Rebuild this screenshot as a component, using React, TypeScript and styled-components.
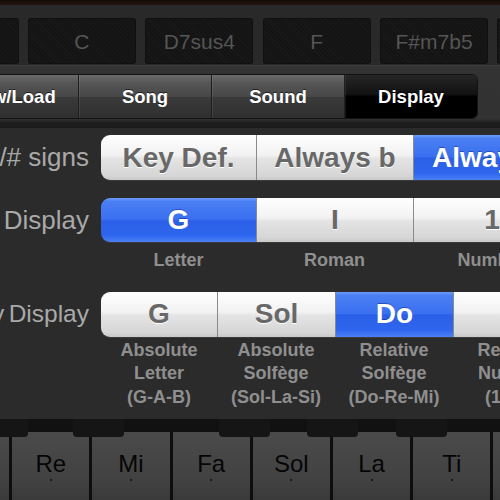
import React from "react"
import styled, { createGlobalStyle } from "styled-components"

const GlobalStyle = createGlobalStyle`
  html, body {
    margin: 0;
    padding: 0;
    background: #2a2a2a;
  }
  body {
    font-family: "Liberation Sans", Arial, sans-serif;
  }
`

const Screen = styled.div`
  width: 500px;
  height: 500px;
  overflow: hidden;
  background: #2a2a2a;
  display: flex;
  flex-direction: column;
`

// chord strip on top
const TopEdge = styled.div`
  height: 5px;
  background: linear-gradient(#140c08, #21150f);
  flex: none;
`

const ChordStrip = styled.div`
  height: 60px;
  flex: none;
  display: flex;
  gap: 9.4px;
  padding-top: 13px;
  box-sizing: border-box;
  margin-left: -89.5px;
  background: #292929;
`

const ChordBox = styled.div`
  width: 108px;
  height: 46px;
  flex: none;
  border-radius: 3px;
  background:
    repeating-linear-gradient(45deg, rgba(255, 255, 255, 0.02) 0 1px, transparent 1px 3px),
    #141414;
  box-shadow: inset 0 0 0 1px #101010;
  display: flex;
  align-items: center;
  justify-content: center;
  padding-top: 2px;
  box-sizing: border-box;
  color: #555;
  font-size: 21px;
`

// tab band
const TabBand = styled.div`
  height: 63px;
  flex: none;
  box-sizing: border-box;
  padding-top: 9px;
  background: linear-gradient(#3c3c3c 0, #333 2px, #323232 54px, #1c1c1c 58px, #1c1c1c 63px);
`

const TabBar = styled.div`
  display: flex;
  width: 533px;
  height: 45px;
  margin-left: -55px;
  border: 1px solid #121212;
  border-radius: 6px;
  overflow: hidden;
  box-sizing: border-box;
`

const Tab = styled.div<{ $on?: boolean }>`
  flex: 1;
  display: flex;
  align-items: center;
  justify-content: center;
  color: #fff;
  font-weight: bold;
  font-size: 18.5px;
  text-shadow: 0 -1px 0 rgba(0, 0, 0, 0.6);
  border-left: 1px solid #1e1e1e;
  box-shadow: inset 1px 0 0 rgba(255, 255, 255, 0.08);
  background: ${(p) =>
    p.$on
      ? "linear-gradient(#262626 0, #111 45%, #000 50%, #000 100%)"
      : "linear-gradient(#6a6a6a 0, #555 20%, #474747 50%, #3a3a3a 52%, #2f2f2f 100%)"};
  &:first-child {
    border-left: none;
  }
`

// settings panel
const Panel = styled.div`
  flex: none;
  height: 291px;
  box-sizing: border-box;
  padding-top: 7px;
  background: #2b2b2b;
  display: flex;
  flex-direction: column;
`

const Row = styled.div<{ $gap: number }>`
  display: flex;
  align-items: flex-start;
  gap: 12px;
  margin-top: ${(p) => p.$gap}px;
  margin-left: -111px;
`

const Label = styled.div<{ $h: number; $size?: number; $spacing?: number }>`
  width: 200px;
  height: ${(p) => p.$h}px;
  flex: none;
  display: flex;
  align-items: center;
  justify-content: flex-end;
  color: #a9a9a9;
  font-size: ${(p) => p.$size ?? 26}px;
  word-spacing: ${(p) => p.$spacing ?? 0}px;
  white-space: nowrap;
`

const Options = styled.div`
  display: flex;
  flex-direction: column;
`

const Segmented = styled.div<{ $h: number }>`
  display: flex;
  height: ${(p) => p.$h}px;
  border-radius: 9px 0 0 9px;
  overflow: hidden;
  box-shadow: 0 1px 0 rgba(255, 255, 255, 0.08);
`

const Segment = styled.div<{ $w: number; $on?: boolean }>`
  width: ${(p) => p.$w}px;
  flex: none;
  display: flex;
  align-items: center;
  justify-content: center;
  font-weight: bold;
  font-size: 28px;
  box-sizing: border-box;
  border-left: 1px solid #8a8a8a;
  color: ${(p) => (p.$on ? "#fff" : "#686868")};
  text-shadow: ${(p) => (p.$on ? "0 -1px 0 rgba(0, 0, 60, 0.35)" : "0 1px 0 #fff")};
  background: ${(p) =>
    p.$on
      ? "linear-gradient(#6c9bf7 0, #4a7ff4 8%, #3a6ff0 48%, #2b5fe8 52%, #2f66ee 85%, #4b80f4 100%)"
      : "linear-gradient(#fefefe 0, #f2f2f2 45%, #e4e4e4 52%, #d6d6d6 90%, #c9c9c9 100%)"};
  &:first-child {
    border-left: none;
  }
`

const Captions = styled.div<{ $top: number }>`
  display: flex;
  margin-top: ${(p) => p.$top}px;
`

const Caption = styled.div<{ $w: number }>`
  width: ${(p) => p.$w}px;
  flex: none;
  text-align: center;
  color: #8f8f8f;
  font-weight: bold;
  font-size: 18px;
  line-height: 23.5px;
  white-space: pre;
`

// keyboard
const KeyGap = styled.div`
  height: 13px;
  flex: none;
  background: #111;
`

const Keyboard = styled.div`
  position: relative;
  flex: 1;
  display: flex;
  margin-left: -68px;
`

const Key = styled.div`
  width: 80.2px;
  flex: none;
  box-sizing: border-box;
  border-right: 3px solid #0e0e0e;
  background: linear-gradient(#4a4a4a, #424242 70%, #3a3a3a);
  display: flex;
  flex-direction: column;
  align-items: center;
  padding-top: 19px;
  color: #050505;
  font-size: 24px;
  line-height: 26px;
`

const Dot = styled.span`
  width: 2px;
  height: 2px;
  margin-top: 2px;
  border-radius: 50%;
  background: #080808;
`

const BlackKey = styled.div`
  position: absolute;
  top: -13px;
  height: 18px;
  width: 51px;
  border-radius: 0 0 4px 4px;
  background: #151515;
`

const chords = ["", "C", "D7sus4", "F", "F#m7b5", ""]
const tabs = ["New/Load", "Song", "Sound", "Display"]
const notes = ["Do", "Re", "Mi", "Fa", "Sol", "La", "Ti", "Do"]
const blackKeys = [45, 141, 287, 375, 464]

export default function App() {
  return (
    <Screen>
      <GlobalStyle />
      <TopEdge />
      <ChordStrip>
        {chords.map((c, i) => (
          <ChordBox key={i}>{c}</ChordBox>
        ))}
      </ChordStrip>

      <TabBand>
        <TabBar>
          {tabs.map((t) => (
            <Tab key={t} $on={t === "Display"}>
              {t}
            </Tab>
          ))}
        </TabBar>
      </TabBand>

      <Panel>
        <Row $gap={0}>
          <Label $h={45}>Use b/# signs</Label>
          <Options>
            <Segmented $h={45}>
              <Segment $w={155}>Key Def.</Segment>
              <Segment $w={157}>Always b</Segment>
              <Segment $w={157} $on>
                Always #
              </Segment>
            </Segmented>
          </Options>
        </Row>

        <Row $gap={18}>
          <Label $h={44}>Chord Display</Label>
          <Options>
            <Segmented $h={44}>
              <Segment $w={155} $on>
                G
              </Segment>
              <Segment $w={157}>I</Segment>
              <Segment $w={157}>1</Segment>
            </Segmented>
            <Captions $top={7}>
              <Caption $w={155}>Letter</Caption>
              <Caption $w={157}>Roman</Caption>
              <Caption $w={157}>Number</Caption>
            </Captions>
          </Options>
        </Row>

        <Row $gap={19}>
          <Label $h={45} $size={24.5} $spacing={-2.5}>
            Key Display
          </Label>
          <Options>
            <Segmented $h={45}>
              <Segment $w={116}>G</Segment>
              <Segment $w={118}>Sol</Segment>
              <Segment $w={118} $on>
                Do
              </Segment>
              <Segment $w={118}>1</Segment>
            </Segmented>
            <Captions $top={2}>
              <Caption $w={116}>{"Absolute\nLetter\n(G-A-B)"}</Caption>
              <Caption $w={118}>{"Absolute\nSolfège\n(Sol-La-Si)"}</Caption>
              <Caption $w={118}>{"Relative\nSolfège\n(Do-Re-Mi)"}</Caption>
              <Caption $w={118}>{"Relative\nNumber\n(1-2-3)"}</Caption>
            </Captions>
          </Options>
        </Row>
      </Panel>

      <KeyGap />
      <Keyboard>
        {notes.map((n, i) => (
          <Key key={i}>
            {n}
            <Dot />
          </Key>
        ))}
        {blackKeys.map((x) => (
          <BlackKey key={x} style={{ left: x }} />
        ))}
      </Keyboard>
    </Screen>
  )
}
